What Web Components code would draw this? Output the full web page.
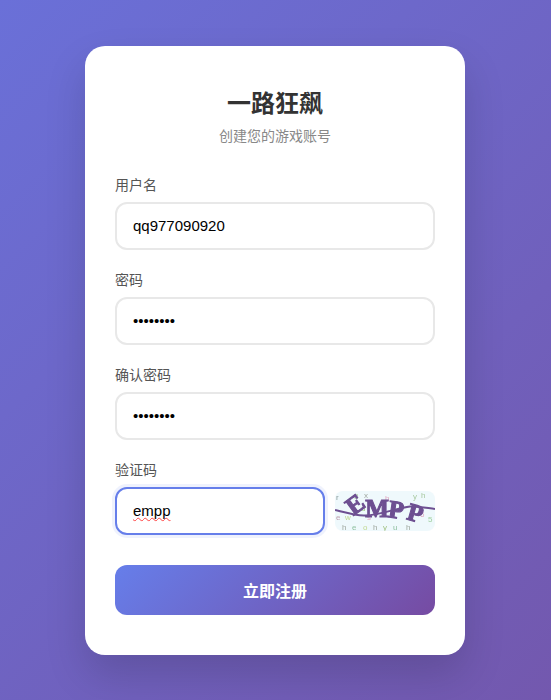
<!DOCTYPE html>
<html lang="zh-CN">
<head>
<meta charset="utf-8">
<title>一路狂飙</title>
<style>
html, body { margin: 0; padding: 0; }
body {
    box-sizing: border-box;
    min-height: 100vh;
    padding-right: 1px;
    display: flex;
    align-items: center;
    justify-content: center;
    background: linear-gradient(135deg, #6a70d8 0%, #7358ae 100%);
    font-family: "Liberation Sans", "Noto Sans CJK SC", sans-serif;
}
</style>
</head>
<body>
<register-card>
    <span slot="title">一路狂飙</span>
    <span slot="subtitle">创建您的游戏账号</span>
    <form-field label="用户名"><text-box>qq977090920</text-box></form-field>
    <form-field label="密码"><text-box>••••••••</text-box></form-field>
    <form-field label="确认密码"><text-box>••••••••</text-box></form-field>
    <form-field label="验证码">
        <captcha-row>
            <text-box focused misspelled>empp</text-box>
            <captcha-image slot="image"></captcha-image>
        </captcha-row>
    </form-field>
    <submit-button>立即注册</submit-button>
</register-card>

<script>
const cardTemplate = document.createElement("template");
cardTemplate.innerHTML = `
<style>
:host {
    display: block;
    box-sizing: border-box;
    width: 380px;
    padding: 40px 30px;
    background: #fff;
    border-radius: 20px;
    box-shadow: 0 20px 40px rgba(0, 0, 0, 0.15);
}
.head { text-align: center; margin-bottom: 29px; }
h1 { margin: 0 0 6px; font-size: 24px; line-height: 35px; font-weight: 700; color: #333; }
p { margin: 0; font-size: 14px; line-height: 19px; color: #888; }
</style>
<div class="head">
    <h1><slot name="title"></slot></h1>
    <p><slot name="subtitle"></slot></p>
</div>
<slot></slot>
`;

class RegisterCard extends HTMLElement {
    constructor() {
        super();
        this.attachShadow({ mode: "open" });
        this.shadowRoot.append(cardTemplate.content.cloneNode(true));
    }
}

const fieldTemplate = document.createElement("template");
fieldTemplate.innerHTML = `
<style>
:host { display: block; margin-bottom: 20px; }
label { display: block; padding-top: 1px; margin-bottom: 7px; font-size: 14px; line-height: 19px; color: #555; }
</style>
<label></label>
<slot></slot>
`;

class FormField extends HTMLElement {
    constructor() {
        super();
        this.attachShadow({ mode: "open" });
        this.shadowRoot.append(fieldTemplate.content.cloneNode(true));
        this.shadowRoot.querySelector("label").textContent = this.getAttribute("label");
    }
}

const boxTemplate = document.createElement("template");
boxTemplate.innerHTML = `
<style>
:host {
    display: block;
    box-sizing: border-box;
    height: 48px;
    padding: 13px 16px;
    background: #fff;
    border: 2px solid #e8e8e8;
    border-radius: 12px;
    font-size: 15px;
    line-height: 18px;
    color: #000;
    white-space: nowrap;
    overflow: hidden;
}
:host([focused]) {
    border-color: #667eea;
    box-shadow: 0 0 0 3px rgba(102, 126, 234, 0.1);
}
:host([misspelled]) span {
    text-decoration: underline wavy #f44 1px;
    text-underline-offset: 1px;
    text-decoration-skip-ink: none;
}
</style>
<span><slot></slot></span>
`;

class TextBox extends HTMLElement {
    constructor() {
        super();
        this.attachShadow({ mode: "open" });
        this.shadowRoot.append(boxTemplate.content.cloneNode(true));
    }
}

const rowTemplate = document.createElement("template");
rowTemplate.innerHTML = `
<style>
:host { display: flex; align-items: center; gap: 10px; }
::slotted(text-box) { flex: 1; }
</style>
<slot></slot>
<slot name="image"></slot>
`;

class CaptchaRow extends HTMLElement {
    constructor() {
        super();
        this.attachShadow({ mode: "open" });
        this.shadowRoot.append(rowTemplate.content.cloneNode(true));
    }
}

// noise characters behind the big letters: x, y, char, colour
const noise = [
    [1, 9, "r", "#8a9a9a"], [19, 8, "3", "#a8c8a0"], [29, 7, "x", "#a0a8a0"], [50, 10, "h", "#e0a8c0"],
    [78, 8, "y", "#a8c8a0"], [86, 7, "h", "#a8c8a0"], [26, 20, "d", "#a0c880"],
    [1, 29, "e", "#c0a0b0"], [10, 29, "w", "#c0d890"], [32, 29, "s", "#e0a8c0"], [85, 26, "6", "#e0a8c0"],
    [93, 31, "5", "#a0d0a0"], [7, 39, "h", "#a0a8a0"], [17, 39, "e", "#90c0a0"], [38, 39, "h", "#a0a8a0"],
    [48, 39, "y", "#a0c080"], [58, 39, "u", "#90c0a0"], [71, 39, "h", "#a0a8a0"], [28, 39, "o", "#c0d890"]
];
// the four big letters: x, y, angle, char
const letters = [[25, 20, -36, "E"], [42, 26, 0, "M"], [60, 27, 8, "P"], [78, 30, 16, "P"]];

class CaptchaImage extends HTMLElement {
    constructor() {
        super();
        this.attachShadow({ mode: "open" });
        const small = noise.map(([x, y, c, col]) =>
            `<text x="${x}" y="${y}" font-size="8" fill="${col}">${c}</text>`).join("");
        const big = letters.map(([x, y, a, c]) =>
            `<text transform="translate(${x} ${y}) rotate(${a})" text-anchor="middle" font-family="Liberation Serif, serif" font-size="25" font-weight="700" fill="#6d4f91" stroke="#6d4f91" stroke-width="1.1">${c}</text>`).join("");
        this.shadowRoot.innerHTML = `
<style>
:host { display: block; flex: none; width: 100px; height: 40px; border-radius: 8px; overflow: hidden; }
svg { display: block; font-family: "Liberation Sans", sans-serif; filter: blur(0.3px); }
</style>
<svg width="100" height="40" viewBox="0 0 100 40">
    <rect width="100" height="40" fill="#eff9fc"/>
    ${small}
    ${big}
    <path d="M0 19 C12 22 22 25 30 24.5 C46 24 62 17 75 15.5 C84 15 92 17 100 18" fill="none" stroke="#6d4f91" stroke-width="2"/>
</svg>`;
    }
}

const buttonTemplate = document.createElement("template");
buttonTemplate.innerHTML = `
<style>
:host { display: block; margin-top: 30px; }
button {
    display: block;
    width: 100%;
    height: 50px;
    padding: 0;
    border: none;
    border-radius: 12px;
    background: linear-gradient(135deg, #667eea 0%, #764ba2 100%);
    color: #fff;
    font-family: "Liberation Sans", "Noto Sans CJK SC", sans-serif;
    font-size: 16px;
    font-weight: 700;
}
</style>
<button type="button"><slot></slot></button>
`;

class SubmitButton extends HTMLElement {
    constructor() {
        super();
        this.attachShadow({ mode: "open" });
        this.shadowRoot.append(buttonTemplate.content.cloneNode(true));
    }
}

customElements.define("register-card", RegisterCard);
customElements.define("form-field", FormField);
customElements.define("text-box", TextBox);
customElements.define("captcha-row", CaptchaRow);
customElements.define("captcha-image", CaptchaImage);
customElements.define("submit-button", SubmitButton);
</script>
</body>
</html>
